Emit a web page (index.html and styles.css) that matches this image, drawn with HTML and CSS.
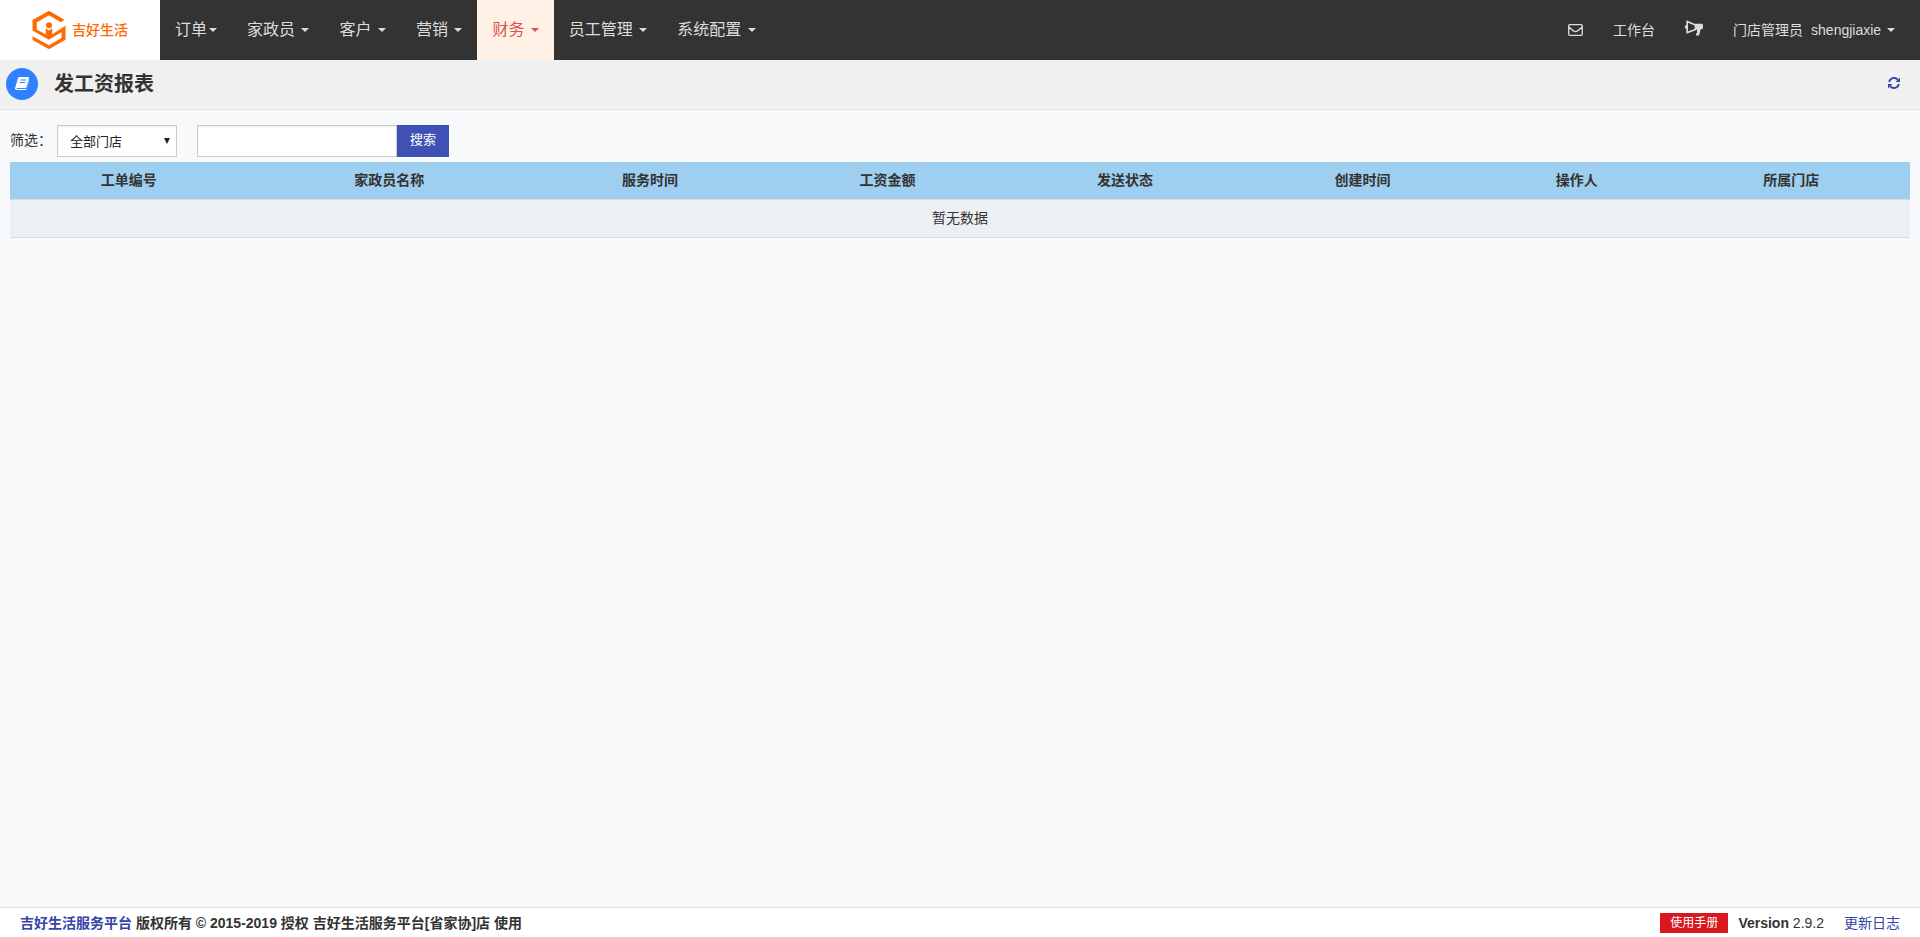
FILE: index.html
```html
<!DOCTYPE html>
<html lang="zh-CN">
<head>
<meta charset="utf-8">
<title>发工资报表</title>
<link rel="stylesheet" href="styles.css">
</head>
<body>
<header class="navbar">
  <a class="brand" href="#">
    <svg class="brand-mark" viewBox="0 0 34 38" aria-hidden="true">
      <path fill="#ff6a00" d="M32.500 8.800 28.800 11.200 17 4.300 4.800 11.200V18.500L17 25.200 33.500 14.800V28.800L17 38.200.5 29V25.200L17 34.300 29.500 27V21L17 28.800.5 19.500V9L17-.2z"/>
      <circle cx="17" cy="14.300" r="3" fill="#ff6a00"/>
      <path fill="#ff6a00" d="M13.800 17.300 17 19.500 20.200 17.300V24.500L17 26.500 13.800 24.500z"/>
    </svg>
    <span>吉好生活</span>
  </a>
  <nav class="menu">
    <a class="menu-link" href="#">订单<i class="caret"></i></a>
    <a class="menu-link" href="#">家政员 <i class="caret"></i></a>
    <a class="menu-link" href="#">客户 <i class="caret"></i></a>
    <a class="menu-link" href="#">营销 <i class="caret"></i></a>
    <a class="menu-link active" href="#">财务 <i class="caret"></i></a>
    <a class="menu-link" href="#">员工管理 <i class="caret"></i></a>
    <a class="menu-link" href="#">系统配置 <i class="caret"></i></a>
  </nav>
  <div class="menu tools">
    <a class="menu-link" href="#" aria-label="消息">
      <svg class="icon-mail" viewBox="0 0 15 12" aria-hidden="true"><path fill="none" stroke="currentColor" stroke-width="1.300" d="M1.700.7h11.600a1 1 0 0 1 1 1v8.600a1 1 0 0 1-1 1H1.700a1 1 0 0 1-1-1V1.700a1 1 0 0 1 1-1zM.7 2.700C2.700 4.700 5.900 7.700 7.500 7.700s4.800-3 6.800-5"/></svg>
    </a>
    <a class="menu-link" href="#">工作台</a>
    <a class="menu-link" href="#" aria-label="公告">
      <svg class="icon-horn" viewBox="0 0 18 16" aria-hidden="true"><path fill="none" stroke="currentColor" stroke-width="1.600" d="M2.200 1.500 10.500 5v4.500L2.200 12.500z"/><path fill="currentColor" d="M0 5.500h2.500v3H0zM10 3.800h6.500c1 0 1.500.6 1.500 1.500v2c0 1.500-1 2.200-2.500 2.200L14.500 14c-.2 1-.6 1.500-1.500 1.500h-2V14l1-1V9.500h-2z"/></svg>
    </a>
    <a class="menu-link" href="#"><span>门店管理员</span><span class="account">shengjiaxie </span><i class="caret"></i></a>
  </div>
</header>

<section class="title-bar">
  <span class="title-icon">
    <svg viewBox="0 0 14 13" aria-hidden="true"><path fill="#fff" d="M4.500 0H13c.8 0 1.200.6 1 1.300L11.500 10c-.2.600-.7 1-1.300 1H2c-.7 0-.7.900 0 .9h8.700c.5 0 .9-.3 1-.7L13.800 3c.3.300.2.700.1 1l-2.200 7.700c-.2.800-.8 1.300-1.600 1.300H1.800C.6 13-.2 12 .1 11L2.800 1.700C3.100.7 3.700 0 4.500 0z"/><path stroke="#3080ff" d="M5.500 3h5.500M4.800 5.500h5.500"/></svg>
  </span>
  <h1>发工资报表</h1>
  <a class="refresh" href="#" aria-label="刷新">
    <svg viewBox="0 0 12 12" aria-hidden="true"><path fill="none" stroke="currentColor" stroke-width="1.800" d="M1.200 5A4.900 4.900 0 0 1 9.700 2.700M10.800 7a4.900 4.900 0 0 1-8.500 2.300"/><path fill="currentColor" d="M12 .5V5H7.500zM0 11.500V7h4.500z"/></svg>
  </a>
</section>

<main class="content">
  <form class="filters">
    <label for="store">筛选：</label>
    <span class="select-wrap">
      <select id="store"><option>全部门店</option></select>
      <svg class="select-arrow" viewBox="0 0 6 6" aria-hidden="true"><path fill="#222" d="M0 0h6L3 6z"/></svg>
    </span>
    <input class="keyword" type="text" aria-label="关键字">
    <button class="search" type="button">搜索</button>
  </form>
  <table class="report">
    <thead>
      <tr><th>工单编号</th><th>家政员名称</th><th>服务时间</th><th>工资金额</th><th>发送状态</th><th>创建时间</th><th>操作人</th><th>所属门店</th></tr>
    </thead>
    <tbody>
      <tr><td colspan="8">暂无数据</td></tr>
    </tbody>
  </table>
</main>

<footer class="footer">
  <strong><a href="#">吉好生活服务平台</a> 版权所有 © 2015-2019 授权 吉好生活服务平台[省家协]店 使用</strong>
  <div class="release">
    <a class="manual" href="#">使用手册</a>
    <span><b>Version</b> 2.9.2</span>
    <a class="log" href="#">更新日志</a>
  </div>
</footer>
</body>
</html>
```
FILE: styles.css
```css
* { box-sizing: border-box; }

body {
  display: flex;
  flex-direction: column;
  min-height: 100vh;
  margin: 0;
  background: #f8f9fb;
  color: #333;
  font: 14px/20px "Liberation Sans", "Noto Sans CJK SC", sans-serif;
}

a { color: #3743a8; text-decoration: none; }
svg { display: block; }

.navbar { display: flex; height: 60px; background: #333; }

.brand {
  display: flex;
  align-items: center;
  justify-content: center;
  gap: 6px;
  width: 160px;
  background: #fff;
  color: #ff6a00;
  font-weight: 500;
}
.brand-mark { width: 34px; height: 38px; }

.menu { display: flex; font-size: 16px; }
.menu-link {
  display: flex;
  align-items: center;
  padding: 0 15px;
  color: #ddd;
  white-space: pre;
}
.menu-link.active { background: #fff1e6; color: #d9534f; }
.caret {
  margin-left: 2px;
  border: 4px solid transparent;
  border-top-color: currentColor;
  border-bottom: 0;
}

.tools { margin-left: auto; padding-right: 10px; font-size: 14px; }
.account { margin-left: 8px; }
.icon-mail { width: 15px; height: 12px; }
.icon-horn { width: 18px; height: 16px; margin-bottom: 4px; }

.title-bar {
  display: flex;
  align-items: center;
  height: 50px;
  padding: 0 20px 2px 6px;
  border-bottom: 1px solid #e3e3e3;
  background: #f0f0f0;
}
.title-icon {
  display: grid;
  place-items: center;
  width: 32px;
  height: 32px;
  border-radius: 50%;
  background: #3080ff;
}
.title-icon svg { width: 14px; height: 13px; }
.title-bar h1 { margin: 0 0 0 16px; font-size: 20px; line-height: 28px; }
.refresh { margin-left: auto; padding-bottom: 2px; }
.refresh svg { width: 12px; height: 12px; }

.content { flex: 1; padding: 15px 10px; }

.filters { display: flex; align-items: center; height: 32px; margin-bottom: 5px; }
.filters label { width: 47px; padding-bottom: 2px; }
.select-wrap { position: relative; width: 120px; margin-right: 20px; }
.filters select,
.keyword {
  display: block;
  height: 32px;
  border: 1px solid #ccc;
  border-radius: 0;
  background: #fff;
  box-shadow: inset 0 1px 1px rgba(0, 0, 0, .08);
  color: #222;
  font: 13px/20px "Liberation Sans", "Noto Sans CJK SC", sans-serif;
}
.filters select { appearance: none; width: 100%; padding: 2px 12px 0; }
.select-arrow { position: absolute; top: 13px; right: 7px; width: 6px; height: 6px; pointer-events: none; }
.keyword { width: 200px; padding: 0 12px; }
.search {
  width: 52px;
  height: 32px;
  padding: 0 0 2px;
  border: 0;
  background: #3f51b5;
  color: #fff;
  font: 13px/20px "Liberation Sans", "Noto Sans CJK SC", sans-serif;
}

.report { width: 100%; border-collapse: collapse; text-align: center; }
.report th,
.report td { padding: 8px 8px 9px; border-bottom: 1px solid #d8dcde; }
.report th { background: #9ecef0; }
.report td { background: #ecf0f3; }

.footer {
  display: flex;
  align-items: center;
  justify-content: space-between;
  height: 30px;
  padding: 0 20px;
  border-top: 1px solid #e0e0e0;
  background: #fff;
}
.release { display: flex; align-items: center; }
.manual { margin-right: 10px; padding: 0 10px; background: #d9171f; color: #fff; font-size: 12px; }
.log { margin-left: 20px; }
```
